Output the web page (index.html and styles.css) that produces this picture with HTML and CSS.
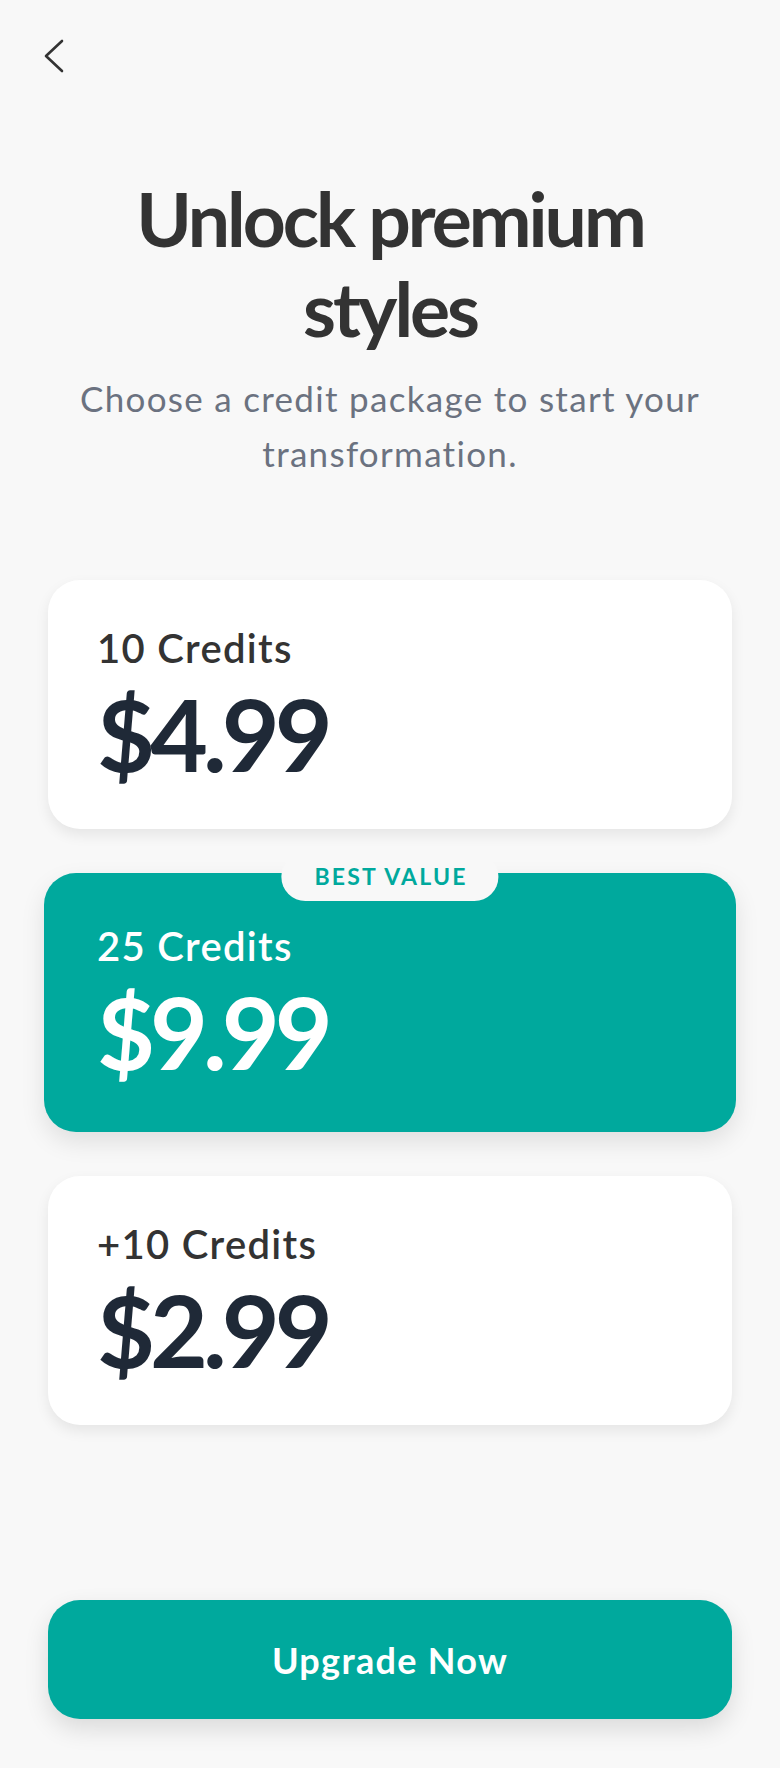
FILE: index.html
```html
<!DOCTYPE html>
<html lang="en">
<head>
<meta charset="utf-8">
<title>Unlock premium styles</title>
<link rel="stylesheet" href="styles.css">
</head>
<body>
<div class="page">
  <header class="topbar">
    <button class="back" aria-label="Back">
      <svg width="48" height="48" viewBox="0 0 48 48"><path d="M32 9 L16 24 L32 39" fill="none" stroke="#333" stroke-width="2.6" stroke-linecap="round" stroke-linejoin="round"/></svg>
    </button>
  </header>
  <h1 class="title">Unlock premium styles</h1>
  <p class="subtitle">Choose a credit package to start your transformation.</p>
  <section class="plans">
    <div class="card">
      <div class="label">10 Credits</div>
      <div class="price">$4.99</div>
    </div>
    <div class="card card-selected">
      <span class="badge">BEST VALUE</span>
      <div class="label">25 Credits</div>
      <div class="price">$9.99</div>
    </div>
    <div class="card">
      <div class="label">+10 Credits</div>
      <div class="price">$2.99</div>
    </div>
  </section>
  <footer class="footer">
    <button class="cta">Upgrade Now</button>
  </footer>
</div>
</body>
</html>
```
FILE: styles.css
```css
* { box-sizing: border-box; }
html, body { margin: 0; padding: 0; }
body {
  background: #f8f8f8;
  font-family: "Lato", "Noto Sans", sans-serif;
  color: #333;
}
.page {
  min-height: 100vh;
  display: flex;
  flex-direction: column;
}
.topbar {
  padding: 32px 0 0 30px;
  height: 80px;
}
.back {
  width: 48px;
  height: 48px;
  padding: 0;
  border: 0;
  background: none;
  display: block;
}
.back svg { display: block; }
.title {
  margin: 93px auto 0;
  max-width: 620px;
  text-align: center;
  font-size: 75px;
  line-height: 90px;
  font-weight: 700;
  letter-spacing: -3px;
  color: #333;
}
.subtitle {
  margin: 18px 40px 0;
  text-align: center;
  font-size: 35px;
  line-height: 55px;
  font-weight: 400;
  letter-spacing: 1.3px;
  color: #6b7280;
}
.plans {
  margin-top: 99px;
  padding: 0 48px;
  display: flex;
  flex-direction: column;
  gap: 44px;
}
.card {
  position: relative;
  background: #fff;
  border-radius: 32px;
  padding: 44px 48px 46px 49px;
  box-shadow: 0 6px 14px rgba(0, 0, 0, 0.08);
}
.label {
  font-size: 40px;
  line-height: 48px;
  font-weight: 600;
  letter-spacing: 1.3px;
  color: #333;
}
.price {
  margin-top: 11px;
  font-size: 100px;
  line-height: 100px;
  font-weight: 700;
  letter-spacing: -5px;
  color: #1f2937;
}
.card-selected {
  background: #00a99d;
  margin: 0 -4px;
  padding: 49px 48px 51px 53px;
  box-shadow: 0 10px 24px rgba(0, 0, 0, 0.10);
}
.card-selected .label,
.card-selected .price { color: #fff; }
.badge {
  position: absolute;
  top: -21px;
  left: 50%;
  transform: translateX(-50%);
  height: 49px;
  line-height: 49px;
  padding: 0 31px 0 33px;
  border-radius: 24px;
  background: #f8f8f8;
  color: #00a99d;
  font-size: 23px;
  font-weight: 700;
  letter-spacing: 2.2px;
  white-space: nowrap;
}
.footer {
  margin-top: auto;
  padding: 0 48px 49px;
}
.cta {
  display: block;
  width: 100%;
  height: 119px;
  border: 0;
  border-radius: 32px;
  background: #00a99d;
  color: #fff;
  font-family: "Lato", "Noto Sans", sans-serif;
  font-size: 36px;
  font-weight: 700;
  letter-spacing: 1.3px;
  box-shadow: 0 10px 24px rgba(0, 0, 0, 0.12);
}
```
